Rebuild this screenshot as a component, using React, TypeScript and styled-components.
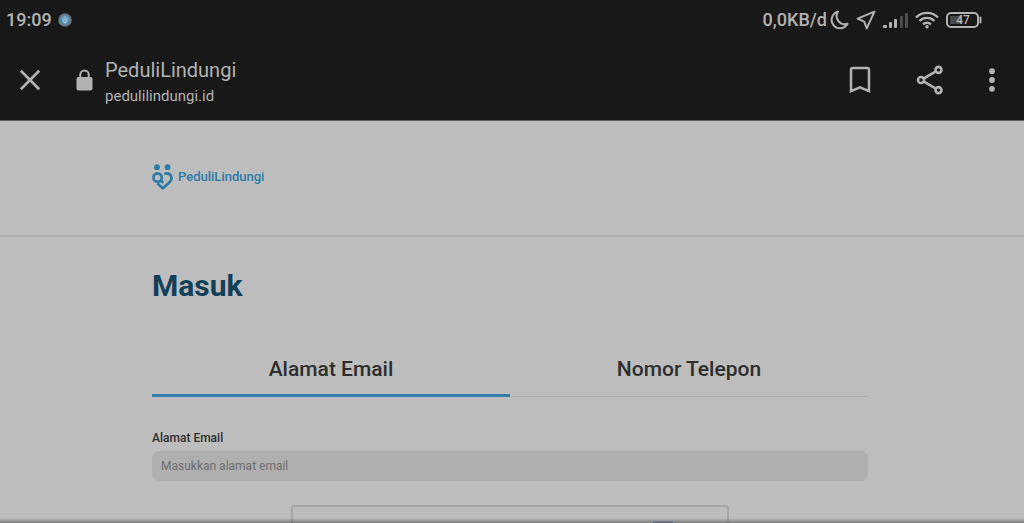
import React from 'react';
import styled, { createGlobalStyle } from 'styled-components';

const GlobalStyle = createGlobalStyle`
  *, *::before, *::after { box-sizing: border-box; }
  body {
    margin: 0;
    background: #bdbdbd;
    color: #2e2e2e;
    font-family: Roboto, 'Liberation Sans', sans-serif;
  }
  button, input { font: inherit; color: inherit; }
`;

const Screen = styled.div`
  display: flex;
  flex-direction: column;
  height: 100vh;
  overflow: hidden;
`;

const Chrome = styled.header`
  flex: none;
  background: #181818;
  color: #b2b2b2;
  border-bottom: 1px solid #606060;
`;

const StatusBar = styled.div`
  display: flex;
  align-items: center;
  justify-content: space-between;
  height: 40px;
  padding: 0 42px 0 6px;
  font-size: 18px;
  font-weight: 500;
  line-height: 20px;
`;

const StatusGroup = styled.div<{ $gap: number }>`
  display: flex;
  align-items: center;
  gap: ${(p) => p.$gap}px;
`;

const Toolbar = styled.div`
  display: flex;
  align-items: center;
  justify-content: space-between;
  height: 80px;
  padding: 0 18px 0 16px;
`;

const SiteInfo = styled.div`
  display: flex;
  align-items: center;
  gap: 12px;
`;

const IconButton = styled.button`
  display: flex;
  align-items: center;
  justify-content: center;
  width: 28px;
  height: 32px;
  padding: 0;
  border: 0;
  background: none;
  cursor: pointer;
`;

const CloseButton = styled(IconButton)`
  margin-right: 20px;
`;

const Actions = styled.div`
  display: flex;
  gap: 42px;
`;

const MenuButton = styled(IconButton)`
  margin-left: -8px;
`;

const SiteText = styled.div`
  padding-top: 3px;
`;

const SiteTitle = styled.div`
  font-size: 20px;
  line-height: 28px;
`;

const SiteHost = styled.div`
  font-size: 15px;
  line-height: 24px;
`;

const SiteHeader = styled.div`
  flex: none;
  height: 116px;
  padding: 43px 156px 0 152px;
  border-bottom: 2px solid #b0b0b0;
`;

const Brand = styled.a`
  display: inline-flex;
  align-items: center;
  gap: 5px;
  color: #2b7ba8;
  font-size: 13px;
  font-weight: 500;
  line-height: 20px;
  text-decoration: none;
`;

const Main = styled.main`
  flex: none;
  padding: 29px 156px 0 152px;
`;

const Heading = styled.h1`
  margin: 0;
  color: #123f5a;
  font-size: 30px;
  font-weight: 700;
  line-height: 40px;
`;

const Tabs = styled.div`
  display: grid;
  grid-template-columns: 1fr 1fr;
  margin-top: 36px;
`;

const Tab = styled.button<{ $active?: boolean }>`
  height: 55px;
  padding: 0;
  border: 0;
  background: none;
  box-shadow: inset 0 ${(p) => (p.$active ? '-3px #2f7eae' : '-1px #adadad')};
  font-size: 21px;
  font-weight: 500;
  line-height: 55px;
  cursor: pointer;
`;

const Field = styled.div`
  display: flex;
  flex-direction: column;
  gap: 5px;
  margin-top: 33px;
`;

const Label = styled.label`
  font-size: 12px;
  font-weight: 500;
  line-height: 16px;
`;

const TextInput = styled.input`
  width: 100%;
  height: 30px;
  padding: 0 9px;
  border: 0;
  border-radius: 7px;
  background: #afafaf;
  font-size: 12px;
  &::placeholder { color: #6e6e6e; opacity: 1; }
`;

const Captcha = styled.div`
  display: flex;
  justify-content: flex-end;
  width: 438px;
  max-width: 100%;
  height: 108px;
  margin: 24px auto 0;
  padding: 14px 48px;
  border: 2px solid #a6a6a6;
  border-radius: 3px;
`;

const BottomShade = styled.div`
  position: fixed;
  right: 0;
  bottom: 0;
  left: 0;
  height: 5px;
  background: linear-gradient(rgba(80, 80, 80, 0), rgba(80, 80, 80, 0.6));
`;

const stroke = { fill: 'none', stroke: 'currentColor' } as const;

const NotificationIcon = () => (
  <svg width="14" height="14" viewBox="0 0 14 14" aria-hidden="true">
    <circle cx="7" cy="7" r="6" fill="#5490b0" stroke="#6b7377" strokeWidth="1.6" />
    <path d="M5 4.5v3.2l2 2.5 2-2.5V4.5M7 3v5" fill="none" stroke="#a9c6d3" strokeWidth="1.1" />
  </svg>
);

const MoonIcon = () => (
  <svg width="19" height="20" viewBox="0 0 19 20" aria-hidden="true">
    <path d="M8 1.8A8.4 8.4 0 1 0 17.5 13.8 8.1 8.1 0 0 1 8 1.8Z" {...stroke} strokeWidth="2" strokeLinejoin="round" />
  </svg>
);

const LocationIcon = () => (
  <svg width="20" height="20" viewBox="0 0 20 20" aria-hidden="true">
    <path d="M18.4 1.7 1.6 8.7l6.6 2.9 2.6 6.8Z" {...stroke} strokeWidth="2" strokeLinejoin="round" />
  </svg>
);

const SignalIcon = () => (
  <svg width="26" height="18" viewBox="0 0 26 18" fill="currentColor" aria-hidden="true">
    <rect x="0" y="14" width="4" height="3" rx="1" />
    <rect x="6" y="11" width="3" height="6" rx="1" />
    <rect x="11" y="8" width="3" height="9" rx="1" />
    <rect x="17" y="5" width="3" height="12" rx="1" opacity=".35" />
    <rect x="22" y="2" width="3" height="15" rx="1" opacity=".35" />
  </svg>
);

const WifiIcon = () => (
  <svg width="24" height="18" viewBox="0 0 24 18" aria-hidden="true">
    <g {...stroke} strokeWidth="2.4">
      <path d="M1 6.5a15.5 15.5 0 0 1 22 0" />
      <path d="M4.5 10a10.6 10.6 0 0 1 15 0" />
      <path d="M8 13.4a5.7 5.7 0 0 1 8 0" />
    </g>
    <circle cx="12" cy="15.8" r="1.8" fill="currentColor" />
  </svg>
);

const BatteryIcon = () => (
  <svg width="36" height="16" viewBox="0 0 36 16" aria-label="Battery 47%">
    <rect x="4" y="4" width="12" height="8" fill="#484848" />
    <rect x="1" y="1" width="31" height="14" rx="4" {...stroke} strokeWidth="2" />
    <path d="M34.5 5.5v5" stroke="currentColor" strokeWidth="2" strokeLinecap="round" />
    <text x="17" y="12" textAnchor="middle" fontSize="12" fontWeight="500" fill="currentColor">47</text>
  </svg>
);

const CloseIcon = () => (
  <svg width="22" height="22" viewBox="0 0 22 22" aria-hidden="true">
    <path d="m1.8 1.8 18.4 18.4M20.2 1.8 1.8 20.2" {...stroke} strokeWidth="2.7" />
  </svg>
);

const LockIcon = () => (
  <svg width="17" height="22" viewBox="0 0 17 22" aria-hidden="true">
    <rect x="0.5" y="8" width="16" height="13.5" rx="2" fill="currentColor" />
    <path d="M4.3 9V5.6a4.2 4.2 0 0 1 8.4 0V9" {...stroke} strokeWidth="2" />
  </svg>
);

const BookmarkIcon = () => (
  <svg width="22" height="28" viewBox="0 0 22 28" aria-hidden="true">
    <path d="M2 3.8Q2 2 3.8 2h14.4Q20 2 20 3.8v21.4L11 21.3 2 25.2Z" {...stroke} strokeWidth="2.5" />
  </svg>
);

const ShareIcon = () => (
  <svg width="28" height="30" viewBox="0 0 28 30" aria-hidden="true">
    <g {...stroke} strokeWidth="2.6">
      <path d="m8 13.4 11.4-6.7M8 16.6l11.4 6.7" />
      <circle cx="5" cy="15" r="3" />
      <circle cx="22.5" cy="4.9" r="3" />
      <circle cx="22.5" cy="25.1" r="3" />
    </g>
  </svg>
);

const MenuIcon = () => (
  <svg width="8" height="24" viewBox="0 0 8 24" fill="currentColor" aria-hidden="true">
    <circle cx="4" cy="3.2" r="2.9" />
    <circle cx="4" cy="12" r="2.9" />
    <circle cx="4" cy="20.8" r="2.9" />
  </svg>
);

const BrandMark = () => (
  <svg width="21" height="26" viewBox="0 0 21 26" aria-hidden="true">
    <g fill="#2b7ba8">
      <circle cx="5" cy="3.2" r="2.9" />
      <circle cx="15.6" cy="3.2" r="2.9" />
    </g>
    <g fill="none" stroke="#2b7ba8" strokeWidth="2.7" strokeLinecap="round" strokeLinejoin="round">
      <circle cx="5.6" cy="13.6" r="4.2" />
      <path d="M13.4 9.5c3-.9 6.1 1.2 6.1 4.5 0 2.2-1 3.4-2.4 4.7l-6.3 5.6-4.6-4" />
      <path d="m9 16.8 1.4 1.3" />
    </g>
  </svg>
);

const CaptchaLogo = () => (
  <svg width="32" height="32" viewBox="0 0 32 32" aria-hidden="true">
    <g fill="none" strokeWidth="6">
      <path d="M4 16A12 12 0 0 1 16 4" stroke="#7b93bd" />
      <path d="M16 4a12 12 0 0 1 12 12" stroke="#53658a" />
      <path d="M4 16a12 12 0 0 0 21 8" stroke="#929292" />
    </g>
    <path d="M6 0h20v6H6z" fill="#8090b0" />
  </svg>
);

export default function App() {
  return (
    <Screen>
      <GlobalStyle />
      <Chrome>
        <StatusBar>
          <StatusGroup $gap={6}>
            <span>19:09</span>
            <NotificationIcon />
          </StatusGroup>
          <StatusGroup $gap={7}>
            <StatusGroup $gap={3}>
              <span>0,0KB/d</span>
              <MoonIcon />
            </StatusGroup>
            <LocationIcon />
            <StatusGroup $gap={6}>
              <SignalIcon />
              <WifiIcon />
            </StatusGroup>
            <BatteryIcon />
          </StatusGroup>
        </StatusBar>
        <Toolbar>
          <SiteInfo>
            <CloseButton aria-label="Close"><CloseIcon /></CloseButton>
            <LockIcon />
            <SiteText>
              <SiteTitle>PeduliLindungi</SiteTitle>
              <SiteHost>pedulilindungi.id</SiteHost>
            </SiteText>
          </SiteInfo>
          <Actions>
            <IconButton aria-label="Bookmark"><BookmarkIcon /></IconButton>
            <IconButton aria-label="Share"><ShareIcon /></IconButton>
            <MenuButton aria-label="Menu"><MenuIcon /></MenuButton>
          </Actions>
        </Toolbar>
      </Chrome>
      <SiteHeader>
        <Brand href="#"><BrandMark />PeduliLindungi</Brand>
      </SiteHeader>
      <Main>
        <Heading>Masuk</Heading>
        <Tabs role="tablist">
          <Tab role="tab" aria-selected="true" $active>Alamat Email</Tab>
          <Tab role="tab" aria-selected="false">Nomor Telepon</Tab>
        </Tabs>
        <Field>
          <Label htmlFor="email">Alamat Email</Label>
          <TextInput id="email" type="email" placeholder="Masukkan alamat email" />
        </Field>
        <Captcha><CaptchaLogo /></Captcha>
      </Main>
      <BottomShade />
    </Screen>
  );
}
